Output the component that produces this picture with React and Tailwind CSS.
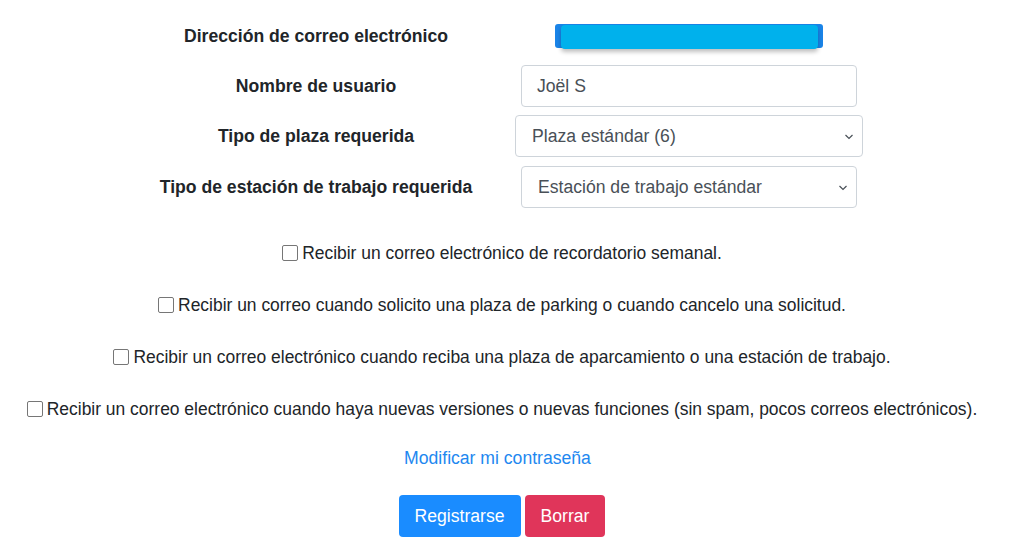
import React from 'react';

const Field = ({ children }) => (
  <div className="flex items-center justify-center">{children}</div>
);

const ChevronSelect = ({ value, width }) => (
  <div className={`relative flex items-center h-[42px] ${width} border border-[#ced4da] rounded-[4px] bg-white pl-[16px] text-[#495057]`}>
    <span>{value}</span>
    <svg className="absolute right-[8px] top-[17px]" width="10" height="8" viewBox="0 0 10 8" fill="none">
      <path d="M1.5 2 L5 5.5 L8.5 2" stroke="#495057" strokeWidth="1.2" />
    </svg>
  </div>
);

const CheckLine = ({ text }) => (
  <label className="flex items-center justify-center h-[52px] text-[17.45px]">
    <span className="w-[16px] h-[16px] mr-[4px] border-[1.5px] border-[#767676] rounded-[2px] bg-white" />
    <span>{text}</span>
  </label>
);

export default function App() {
  const options = [
    'Recibir un correo electrónico de recordatorio semanal.',
    'Recibir un correo cuando solicito una plaza de parking o cuando cancelo una solicitud.',
    'Recibir un correo electrónico cuando reciba una plaza de aparcamiento o una estación de trabajo.',
    'Recibir un correo electrónico cuando haya nuevas versiones o nuevas funciones (sin spam, pocos correos electrónicos).',
  ];

  return (
    <div className="w-[1004px] bg-white font-['Liberation_Sans',Arial,sans-serif] text-[17.6px] leading-[1.5] text-[#212529]">
      {/* profile table */}
      <div className="grid grid-cols-[330px_416px] grid-rows-[50px_50px_50px_52px] ml-[151px] pt-[11px]">
        <Field><span className="font-bold">Dirección de correo electrónico</span></Field>
        <Field>
          <div className="relative w-[268px] h-[24px] rounded-[3px] bg-[#1a84e8]">
            <div className="absolute left-[6px] right-[5px] top-[1px] h-[24px] rounded-[4px] bg-[#00b1ec] shadow-[0_3px_4px_rgba(0,0,0,0.25)]" />
          </div>
        </Field>

        <Field><span className="font-bold">Nombre de usuario</span></Field>
        <Field>
          <div className="flex items-center h-[42px] w-[336px] border border-[#ced4da] rounded-[4px] pl-[15px] text-[#495057]">
            Joël S
          </div>
        </Field>

        <Field><span className="font-bold">Tipo de plaza requerida</span></Field>
        <Field><ChevronSelect value="Plaza estándar (6)" width="w-[348px]" /></Field>

        <Field><span className="font-bold">Tipo de estación de trabajo requerida</span></Field>
        <Field><ChevronSelect value="Estación de trabajo estándar" width="w-[336px]" /></Field>
      </div>

      {/* notification options */}
      <div className="flex flex-col items-center mt-[14px]">
        {options.map((text) => (
          <CheckLine key={text} text={text} />
        ))}
        <a className="mt-[10px] mr-[9px] text-[#1e88f0]">Modificar mi contraseña</a>
        <div className="flex gap-[4px] mt-[24px]">
          <button className="h-[42px] px-[16px] rounded-[4px] bg-[#1a8cff] text-white">Registrarse</button>
          <button className="h-[42px] px-[16px] rounded-[4px] bg-[#e0355a] text-white">Borrar</button>
        </div>
      </div>
    </div>
  );
}
